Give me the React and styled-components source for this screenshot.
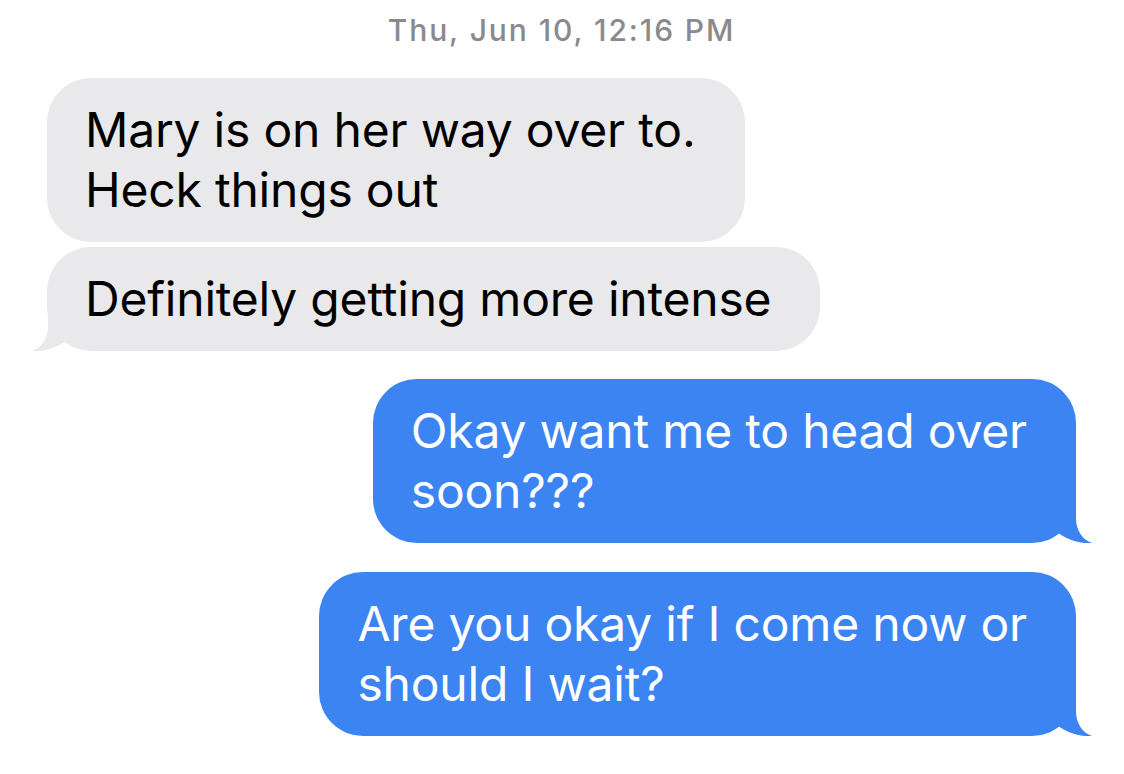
import styled, { createGlobalStyle } from 'styled-components'

const GlobalStyle = createGlobalStyle`
  html, body {
    margin: 0;
    padding: 0;
    background: #ffffff;
  }
  body {
    font-family: Inter, "Liberation Sans", Arial, sans-serif;
    -webkit-font-smoothing: antialiased;
  }
`

const Thread = styled.main`
  display: flex;
  flex-direction: column;
  padding: 12px 48px 30px 47px;
`

const Stamp = styled.div`
  align-self: center;
  color: #8a8a8e;
  font-size: 30px;
  font-weight: 500;
  line-height: 36px;
  letter-spacing: 1.9px;
  margin-bottom: 30px;
`

const Messages = styled.section`
  display: flex;
  flex-direction: column;
  gap: 28px;
`

const Group = styled.div`
  display: flex;
  flex-direction: column;
  align-items: ${props => (props.$mine ? 'flex-end' : 'flex-start')};
  gap: ${props => (props.$mine ? '29px' : '5px')};
`

const Bubble = styled.div`
  position: relative;
  box-sizing: border-box;
  width: fit-content;
  white-space: nowrap;
  padding: 22px 49px 22px 38px;
  border-radius: 44px;
  font-size: 48px;
  line-height: 60px;
  letter-spacing: -0.2px;
  background: ${props => (props.$mine ? '#3c84f2' : '#e9e9eb')};
  color: ${props => (props.$mine ? '#ffffff' : '#000000')};
`

const TailShape = styled.svg`
  position: absolute;
  bottom: 0;
  width: 40px;
  height: 50px;
  ${props => (props.$mine
    ? 'right: -17px;'
    : 'left: -16px; transform: scaleX(-1);')}
`

function Tail({ mine }) {
  return (
    <TailShape $mine={mine} viewBox="0 0 40 50" aria-hidden="true">
      <path
        d="M0 0 L23 0 L23 25 C23 38 30 47 39 50 C27 51 14 47 4 39 L0 39 Z"
        fill={mine ? '#3c84f2' : '#e9e9eb'}
      />
    </TailShape>
  )
}

function Message({ mine, tail, children }) {
  return (
    <Bubble $mine={mine}>
      {children}
      {tail && <Tail mine={mine} />}
    </Bubble>
  )
}

export default function App() {
  return (
    <>
      <GlobalStyle />
      <Thread>
        <Stamp>Thu, Jun 10, 12:16 PM</Stamp>
        <Messages>
          <Group>
            <Message>
              Mary is on her way over to.<br />
              Heck things out
            </Message>
            <Message tail>Definitely getting more intense</Message>
          </Group>
          <Group $mine>
            <Message mine tail>
              Okay want me to head over<br />
              soon???
            </Message>
            <Message mine tail>
              Are you okay if I come now or<br />
              should I wait?
            </Message>
          </Group>
        </Messages>
      </Thread>
    </>
  )
}
